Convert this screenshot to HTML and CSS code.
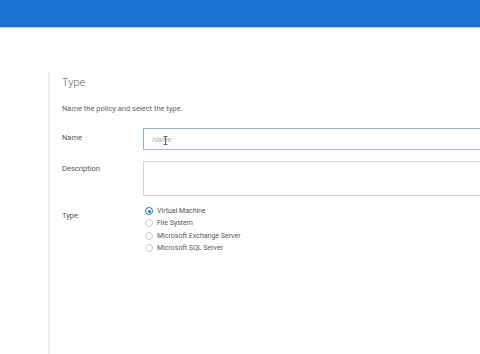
FILE: index.html
```html
<!DOCTYPE html>
<html lang="en">
<head>
<meta charset="UTF-8">
<title>Policy - Type</title>
<link rel="stylesheet" href="styles.css">
</head>
<body>

<!-- TOP BAR -->
<div class="topbar"></div>

<!-- WIZARD STEP -->
<div class="step">
  <h2>Type</h2>
  <p class="hint">Name the policy and select the type.</p>

  <div class="row name-row">
    <label class="label">Name</label>
    <div class="field">
      <input type="text" class="name-input" placeholder="Name">
      <svg class="ibeam" width="5" height="9" viewBox="0 0 5 9"><path d="M0.5 0.5h4M2.5 0.5v8M0.5 8.5h4" stroke="#666" stroke-width="1" fill="none"/></svg>
    </div>
  </div>

  <div class="row desc-row">
    <label class="label">Description</label>
    <div class="field">
      <textarea class="desc-input"></textarea>
    </div>
  </div>

  <div class="row types">
    <label class="label">Type</label>
    <div class="radios">
      <div class="radio checked"><span class="dot"></span>Virtual Machine</div>
      <div class="radio"><span class="dot"></span>File System</div>
      <div class="radio"><span class="dot"></span>Microsoft Exchange Server</div>
      <div class="radio"><span class="dot"></span>Microsoft SQL Server</div>
    </div>
  </div>
</div>

</body>
</html>
```

FILE: styles.css
```css
/* RESET */
*{
  margin:0;
  padding:0;
  box-sizing:border-box;
  font-family:Roboto, "Liberation Sans", sans-serif;
}

body{
  background:#fff;
  width:480px;
  height:354px;
  overflow:hidden;
}

/* TOP BAR */
.topbar{
  height:28px;
  background:#1a73d0;
  border-bottom:1px solid #a9cdee;
}

/* STEP */
.step{
  margin:44px 0 0 48px;
  padding:4px 0 0 12px;
  border-left:2px solid #ededed;
  height:290px;
}

.step h2{
  font-size:11px;
  font-weight:300;
  color:#666;
  line-height:14px;
}

.hint{
  font-size:7.5px;
  color:#666;
  margin-top:14px;
  line-height:10px;
}

/* ROWS */
.row{
  display:flex;
  align-items:flex-start;
}

.label{
  width:81px;
  flex-shrink:0;
  font-size:7.5px;
  color:#555;
  line-height:10px;
}

.field{
  position:relative;
  flex:1;
}

.name-row{
  margin-top:14px;
}

.name-row .label{
  padding-top:5px;
}

input,textarea{
  display:block;
  width:360px;
  border:1px solid #d2d2d2;
  background:#fff;
  font-size:7.5px;
  outline:none;
  resize:none;
}

.name-input{
  height:22px;
  padding:0 8px;
  border-color:#8fb0c6;
  border-bottom-color:#a6c3d6;
}

.name-input::placeholder{
  color:#b0b0b0;
  font-style:italic;
}

.ibeam{
  position:absolute;
  left:20px;
  top:8px;
}

.desc-input{
  height:35px;
  margin-top:11px;
}

.desc-row .label{
  padding-top:14px;
}

/* RADIOS */
.types{
  margin-top:9px;
}

.types .label{
  padding-top:6px;
}

.radios{
  padding-left:2px;
}

.radio{
  display:flex;
  align-items:center;
  font-size:7px;
  color:#555;
  height:12.3px;
}

.dot{
  width:8px;
  height:8px;
  border:1px solid #cacaca;
  border-radius:50%;
  margin-right:4px;
  position:relative;
}

.radio.checked .dot{
  border-color:#1a73d0;
}

.radio.checked .dot::after{
  content:"";
  position:absolute;
  left:1.5px;
  top:1.5px;
  width:3px;
  height:3px;
  border-radius:50%;
  background:#1a73d0;
}
```
